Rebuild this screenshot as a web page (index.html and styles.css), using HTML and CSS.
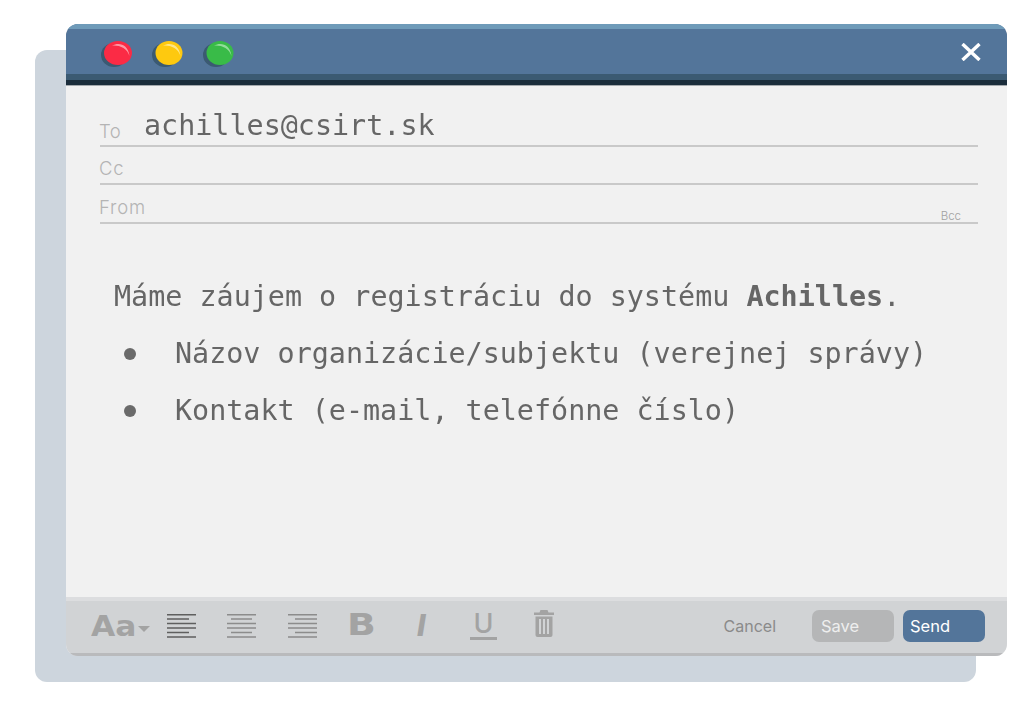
FILE: index.html
```html
<!DOCTYPE html>
<html lang="sk">
<head>
<meta charset="utf-8">
<title>Achilles</title>
<link rel="stylesheet" href="styles.css">
</head>
<body>
<div class="stage">
  <div class="backplate"></div>
  <main class="window">
    <header class="titlebar">
      <div class="lights">
        <svg class="light" viewBox="0 0 32 28"><ellipse cx="13" cy="15" rx="13" ry="12" fill="#3b5a72"/><ellipse cx="17" cy="13" rx="14" ry="12" fill="#fb2b45"/><path d="M11 5.500C18 2 27 4 28.500 16 26 8 19 5 11 5.500z" fill="#fd9aa6"/></svg>
        <svg class="light" viewBox="0 0 32 28"><ellipse cx="13" cy="15" rx="13" ry="12" fill="#3b5a72"/><ellipse cx="17" cy="13" rx="13.500" ry="12" fill="#fec90f"/><path d="M11 5.500C18 2 27 4 28.500 16 26 8 19 5 11 5.500z" fill="#fee688"/></svg>
        <svg class="light" viewBox="0 0 32 28"><ellipse cx="13" cy="15" rx="13" ry="12" fill="#3b5a72"/><ellipse cx="17" cy="13" rx="13.500" ry="12" fill="#39bb48"/><path d="M11 5.500C18 2 27 4 28.500 16 26 8 19 5 11 5.500z" fill="#93dc9b"/></svg>
      </div>
      <svg class="close" viewBox="0 0 20 18"><path d="M1.500 1 18.500 17M18.500 1 1.500 17" stroke="#fff" stroke-width="3.400" fill="none"/></svg>
    </header>

    <section class="fields">
      <div class="field field-to"><span class="label">To</span><span class="address">achilles@csirt.sk</span></div>
      <div class="field"><span class="label">Cc</span></div>
      <div class="field"><span class="label">From</span><span class="bcc">Bcc</span></div>
    </section>

    <section class="message">
      <p class="lead">Máme záujem o registráciu do systému <b>Achilles</b>.</p>
      <ul class="points">
        <li>Názov organizácie/subjektu (verejnej správy)</li>
        <li>Kontakt (e-mail, telefónne číslo)</li>
      </ul>
    </section>

    <footer class="toolbar">
      <span class="tool-aa">Aa</span>
      <svg class="caret" viewBox="0 0 12 6"><path d="M0 0h12L6 6z" fill="#a3a3a3"/></svg>
      <svg class="align align-left" viewBox="0 0 29 24"><path d="M0 .750h29M0 5h22M0 9.500h29M0 14h29M0 18.500h22M0 23h29" stroke="#5f5f5f" stroke-width="1.500"/></svg>
      <svg class="align" viewBox="0 0 29 24"><path d="M0 .750h29M4 5h21M0 9.500h29M0 14h29M4 18.500h21M0 23h29" stroke="#8c8c8c" stroke-width="1.500"/></svg>
      <svg class="align align-right" viewBox="0 0 29 24"><path d="M0 .750h29M7 5h22M0 9.500h29M0 14h29M7 18.500h22M0 23h29" stroke="#8c8c8c" stroke-width="1.500"/></svg>
      <span class="tool-b">B</span>
      <span class="tool-i">I</span>
      <span class="tool-u">U</span>
      <svg class="trash" viewBox="0 0 20 27"><path fill="#a3a3a3" d="M6.500 0h7l1 2.500H20V5H0V2.500h5.500zM1.500 6.500h17V25a2 2 0 0 1-2 2h-13a2 2 0 0 1-2-2zM5 9v15h2V9zm4 0v15h2V9zm4 0v15h2V9z"/></svg>
      <span class="cancel">Cancel</span>
      <span class="btn btn-save">Save</span>
      <span class="btn btn-send">Send</span>
    </footer>
  </main>
</div>
</body>
</html>
```

FILE: styles.css
```css
* { box-sizing: border-box; }
html, body { margin: 0; padding: 0; background: #fff; }
body { overflow: hidden; }

.stage {
  position: relative;
  width: 1024px;
  height: 705px;
  padding: 24px 0 0 66px;
  font-family: "Inter", "Liberation Sans", sans-serif;
}
.backplate {
  position: absolute;
  left: 35px;
  top: 50px;
  width: 941px;
  height: 632px;
  background: #cdd5dd;
  border-radius: 12px;
}
.window {
  position: relative;
  display: flex;
  flex-direction: column;
  width: 941px;
  height: 632px;
  background: #f1f1f1;
  border-radius: 12px;
  overflow: hidden;
}

.titlebar {
  flex: none;
  display: flex;
  align-items: center;
  justify-content: space-between;
  height: 61px;
  padding: 7px 26px 8px 35px;
  background: #53759a;
  border-top: 5px solid #6f9bb9;
  border-bottom: 5px solid #1b2d3b;
  box-shadow: inset 0 -6px 0 #3b5a72, 0 1px 0 #a4a9ad;
}
.lights { display: flex; gap: 19px; }
.light { width: 32px; height: 28px; display: block; }
.close { width: 20px; height: 18px; display: block; margin-top: -4px; }

.fields { flex: none; padding: 24px 29px 0 34px; }
.field {
  display: flex;
  align-items: flex-end;
  height: 38.300px;
  border-bottom: 2px solid #c9c9c9;
}
.field-to { height: 38px; }
.label {
  margin-left: -1px;
  padding-bottom: 4px;
  font-size: 18.500px;
  font-weight: 300;
  letter-spacing: .8px;
  line-height: 22px;
  color: #b4b4b4;
}
.field-to .label { padding-bottom: 3px; letter-spacing: .4px; }
.address {
  margin-left: 23px;
  padding-bottom: 0;
  font-family: "DejaVu Sans Mono", monospace;
  font-size: 28.400px;
  line-height: 38px;
  color: #666;
  will-change: transform;
}
.bcc {
  margin-left: auto;
  margin-right: 17px;
  font-size: 11.500px;
  font-weight: 300;
  line-height: 12px;
  color: #a0a0a0;
}

.message {
  flex: 1;
  padding: 54px 0 0 48px;
  font-family: "DejaVu Sans Mono", monospace;
  font-size: 28.400px;
  line-height: 38px;
  color: #666;
  will-change: transform;
}
.lead { margin: 0; }
.points { margin: 19px 0 0; padding: 0 0 0 61px; list-style: none; }
.points li { position: relative; margin-bottom: 19px; }
.points li::before {
  content: "";
  position: absolute;
  left: -51px;
  top: 13px;
  width: 12px;
  height: 12px;
  border-radius: 50%;
  background: #6a6a6a;
}

.toolbar {
  flex: none;
  display: flex;
  align-items: center;
  height: 59px;
  padding: 0 22px 3px 25px;
  background: #d1d3d5;
  border-top: 4px solid #dcdddf;
  border-bottom: 3px solid #b9babc;
  color: #a3a3a3;
}
.tool-aa {
  font-family: "DejaVu Sans", sans-serif;
  font-size: 28px;
  font-weight: 700;
  line-height: 1;
  width: 47px;
  margin-top: 2px;
  transform: scaleX(1.12);
  transform-origin: left center;
}
.caret { width: 12px; height: 6px; margin-top: 6px; }
.align { width: 29px; height: 24px; margin-left: 31px; }
.align-left { margin-left: 17px; }
.align-right { margin-left: 32px; }
.tool-b {
  font-family: "DejaVu Sans", sans-serif;
  font-size: 31px;
  font-weight: 700;
  line-height: 1;
  margin-left: 30px;
  width: 42px;
  margin-top: -2px;
  transform: scaleX(1.22);
  transform-origin: left center;
}
.tool-i { font-size: 30px; font-weight: 800; font-style: italic; line-height: 1; width: 37px; margin-left: 28px; margin-top: -2px; }
.tool-u { font-size: 27px; font-weight: 500; line-height: 26px; border-bottom: 3px solid #a3a3a3; width: 27px; text-align: center; margin-left: 16px; }
.trash { width: 20px; height: 27px; margin-left: 37px; margin-top: -4px; }
.cancel { margin-left: auto; font-size: 16px; color: #8a8a8a; }
.btn {
  display: block;
  width: 82px;
  height: 32px;
  margin-left: 9px;
  padding-left: 7px;
  border-radius: 7px;
  font-size: 16.500px;
  line-height: 32px;
  color: #fff;
}
.btn-save { margin-left: 36px; background: #b5b6b7; color: #eee; padding-left: 9px; }
.btn-send { background: #53759a; }
```
